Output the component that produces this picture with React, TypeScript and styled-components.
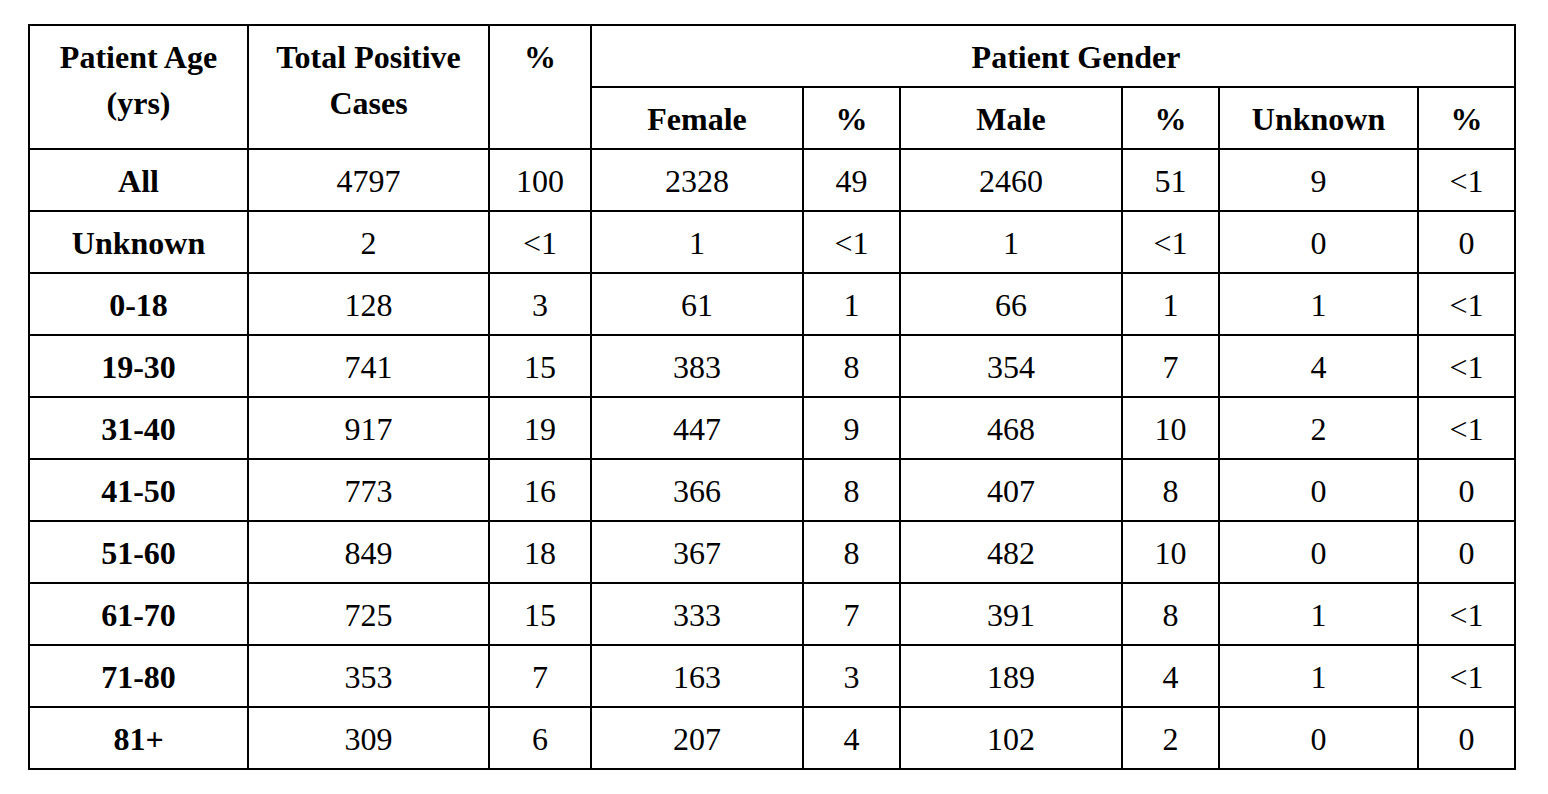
import React from "react";
import styled, { createGlobalStyle } from "styled-components";

const GlobalStyle = createGlobalStyle`
  html, body {
    margin: 0;
    padding: 0;
    background: #ffffff;
  }
  body {
    font-family: "Liberation Serif", "Times New Roman", serif;
    color: #000;
  }
`;

const Page = styled.main`
  padding: 24px 0 0 28px;
  width: 1548px;
  height: 794px;
  box-sizing: border-box;
`;

const Grid = styled.div`
  display: grid;
  grid-template-columns: 217px 239px 100px 210px 95px 220px 95px 197px 95px;
  grid-auto-rows: 60px;
  gap: 2px;
  padding: 2px;
  width: 1488px;
  box-sizing: border-box;
  background: #000;
  font-family: "Liberation Serif", "Times New Roman", serif;
  font-size: 32px;
  line-height: 46px;
`;

const Cell = styled.div<{ $bold?: boolean; $col?: string; $row?: string; $shift?: number }>`
  background: #fff;
  text-align: center;
  padding: 8.2px 0 0 ${(p) => (p.$shift ? `${p.$shift}px` : "0")};
  box-sizing: border-box;
  font-weight: ${(p) => (p.$bold ? 700 : 400)};
  grid-column: ${(p) => p.$col ?? "auto"};
  grid-row: ${(p) => p.$row ?? "auto"};
  white-space: nowrap;
`;

const rows: string[][] = [
  ["All", "4797", "100", "2328", "49", "2460", "51", "9", "<1"],
  ["Unknown", "2", "<1", "1", "<1", "1", "<1", "0", "0"],
  ["0-18", "128", "3", "61", "1", "66", "1", "1", "<1"],
  ["19-30", "741", "15", "383", "8", "354", "7", "4", "<1"],
  ["31-40", "917", "19", "447", "9", "468", "10", "2", "<1"],
  ["41-50", "773", "16", "366", "8", "407", "8", "0", "0"],
  ["51-60", "849", "18", "367", "8", "482", "10", "0", "0"],
  ["61-70", "725", "15", "333", "7", "391", "8", "1", "<1"],
  ["71-80", "353", "7", "163", "3", "189", "4", "1", "<1"],
  ["81+", "309", "6", "207", "4", "102", "2", "0", "0"],
];

const subHeaders = ["Female", "%", "Male", "%", "Unknown", "%"];

export default function App() {
  return (
    <Page>
      <GlobalStyle />
      <Grid role="table">
        <Cell $bold $col="1" $row="1 / span 2">
          Patient Age
          <br />
          (yrs)
        </Cell>
        <Cell $bold $col="2" $row="1 / span 2">
          Total Positive
          <br />
          Cases
        </Cell>
        <Cell $bold $col="3" $row="1 / span 2">
          %
        </Cell>
        <Cell $bold $col="4 / span 6" $row="1" $shift={46}>
          Patient Gender
        </Cell>
        {subHeaders.map((h, i) => (
          <Cell key={`sh-${i}`} $bold $col={`${i + 4}`} $row="2">
            {h}
          </Cell>
        ))}
        {rows.map((r, ri) =>
          r.map((v, ci) => (
            <Cell key={`${ri}-${ci}`} $bold={ci === 0}>
              {v}
            </Cell>
          ))
        )}
      </Grid>
    </Page>
  );
}
